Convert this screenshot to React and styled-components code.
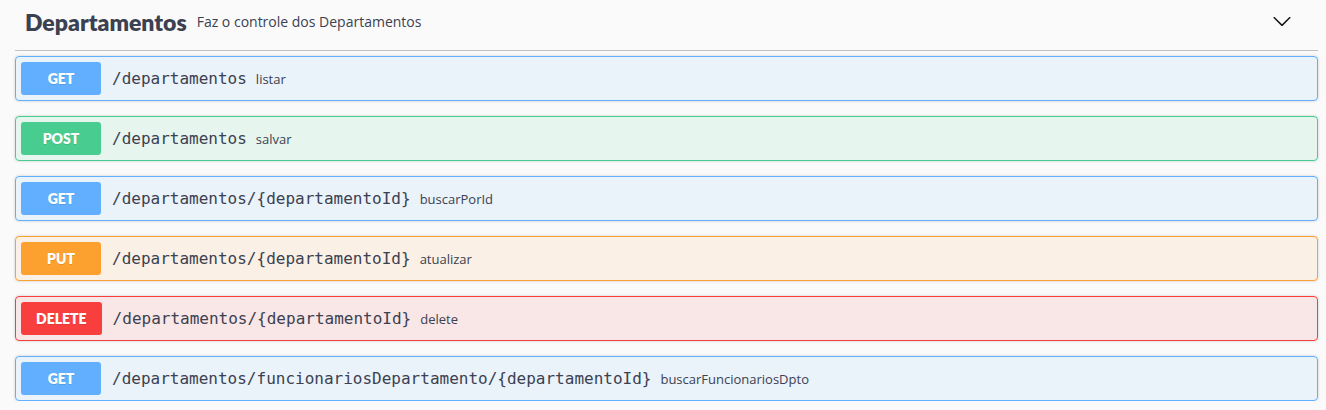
import React from "react";
import styled, { createGlobalStyle } from "styled-components";

const Global = createGlobalStyle`
  html, body { margin: 0; padding: 0; background: #fafafa; }
  body { font-family: "Open Sans", sans-serif; color: #3b4151; }
`;

const METHODS = {
  GET: { c: "97,175,254", hex: "#61affe" },
  POST: { c: "73,204,144", hex: "#49cc90" },
  PUT: { c: "252,161,48", hex: "#fca130" },
  DELETE: { c: "249,62,62", hex: "#f93e3e" },
};

const Page = styled.div`
  padding: 0 8px 0 15px;
`;

const TagHeader = styled.div`
  display: flex;
  align-items: center;
  height: 51px;
  box-sizing: border-box;
  padding: 0 26px 7px 10px;
  border-bottom: 1px solid rgba(59, 65, 81, 0.3);
  margin-bottom: 5px;
`;

const Title = styled.h3`
  margin: 0;
  font-family: "Lato", "Open Sans", sans-serif;
  font-weight: 800;
  font-size: 23px;
  color: #3b4151;
`;

const TagDesc = styled.small`
  font-family: "Open Sans", sans-serif;
  font-size: 14px;
  color: #3b4151;
  margin-left: 10px;
  flex: 1;
`;

const Arrow = styled.svg`
  width: 20px;
  height: 20px;
  margin-top: -2px;
`;

const List = styled.div`
  display: flex;
  flex-direction: column;
  gap: 15px;
`;

const Block = styled.div`
  display: flex;
  align-items: center;
  padding: 5px;
  border: 1px solid ${(p) => p.$hex};
  background: rgba(${(p) => p.$c}, 0.1);
  border-radius: 4px;
  box-shadow: 0 0 3px rgba(0, 0, 0, 0.19);
`;

const Badge = styled.span`
  display: inline-flex;
  align-items: center;
  justify-content: center;
  min-width: 80px;
  height: 33px;
  box-sizing: border-box;
  padding: 0 15px;
  border-radius: 3px;
  background: ${(p) => p.$hex};
  color: #fff;
  font-family: "Lato", "Open Sans", sans-serif;
  font-weight: 800;
  font-size: 14px;
  text-shadow: 0 1px 0 rgba(0, 0, 0, 0.1);
`;

const Path = styled.span`
  font-family: "DejaVu Sans Mono", monospace;
  font-weight: 400;
  font-size: 16px;
  color: #3b4151;
  padding: 0 9px 0 11px;
`;

const Summary = styled.span`
  font-family: "Open Sans", sans-serif;
  font-size: 13px;
  color: #3b4151;
`;

const ops = [
  ["GET", "/departamentos", "listar"],
  ["POST", "/departamentos", "salvar"],
  ["GET", "/departamentos/{departamentoId}", "buscarPorId"],
  ["PUT", "/departamentos/{departamentoId}", "atualizar"],
  ["DELETE", "/departamentos/{departamentoId}", "delete"],
  ["GET", "/departamentos/funcionariosDepartamento/{departamentoId}", "buscarFuncionariosDpto"],
];

export default function App() {
  return (
    <>
      <Global />
      <Page>
        <TagHeader>
          <Title>Departamentos</Title>
          <TagDesc>Faz o controle dos Departamentos</TagDesc>
          <Arrow viewBox="0 0 20 20">
            <path
              fill="#111"
              d="M17.418 6.109c.272-.268.709-.268.979 0s.271.701 0 .969l-7.908 7.83c-.27.268-.707.268-.979 0l-7.908-7.83c-.27-.268-.27-.701 0-.969.271-.268.709-.268.979 0L10 13.25l7.418-7.141z"
            />
          </Arrow>
        </TagHeader>
        <List>
          {ops.map(([m, p, s], i) => (
            <Block key={i} $c={METHODS[m].c} $hex={METHODS[m].hex}>
              <Badge $hex={METHODS[m].hex}>{m}</Badge>
              <Path>{p}</Path>
              <Summary>{s}</Summary>
            </Block>
          ))}
        </List>
      </Page>
    </>
  );
}
